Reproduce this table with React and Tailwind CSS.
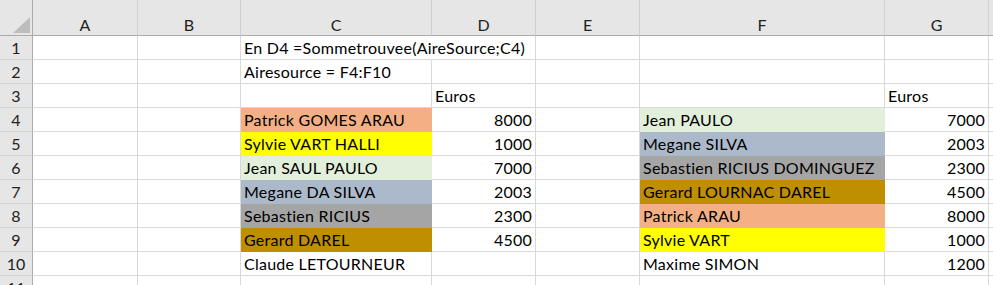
import React from "react";

const cols = ["A", "B", "C", "D", "E", "F", "G", ""];

const FILL = {
  salmon: "bg-[#F4B084] border-[#F4B084]",
  yellow: "bg-[#FFFF00] border-[#FFFF00]",
  green: "bg-[#E2EFDA] border-[#E2EFDA]",
  blue: "bg-[#ACB9CA] border-[#ACB9CA]",
  gray: "bg-[#A5A5A5] border-[#A5A5A5]",
  gold: "bg-[#BF8F00] border-[#BF8F00]",
};

const E = {};
const rows = [
  [E, E, { t: "En D4 =Sommetrouvee(AireSource;C4)", spill: true }, E, E, E, E, E],
  [E, E, { t: "Airesource = F4:F10" }, E, E, E, E, E],
  [E, E, E, { t: "Euros" }, E, E, { t: "Euros" }, E],
  [E, E, { t: "Patrick GOMES ARAU", fill: "salmon" }, { t: "8000", right: true }, E, { t: "Jean PAULO", fill: "green" }, { t: "7000", right: true }, E],
  [E, E, { t: "Sylvie VART HALLI", fill: "yellow" }, { t: "1000", right: true }, E, { t: "Megane SILVA", fill: "blue" }, { t: "2003", right: true }, E],
  [E, E, { t: "Jean SAUL PAULO", fill: "green" }, { t: "7000", right: true }, E, { t: "Sebastien RICIUS DOMINGUEZ", fill: "gray" }, { t: "2300", right: true }, E],
  [E, E, { t: "Megane DA SILVA", fill: "blue" }, { t: "2003", right: true }, E, { t: "Gerard LOURNAC DAREL", fill: "gold" }, { t: "4500", right: true }, E],
  [E, E, { t: "Sebastien RICIUS", fill: "gray" }, { t: "2300", right: true }, E, { t: "Patrick ARAU", fill: "salmon" }, { t: "8000", right: true }, E],
  [E, E, { t: "Gerard DAREL", fill: "gold" }, { t: "4500", right: true }, E, { t: "Sylvie VART", fill: "yellow" }, { t: "1000", right: true }, E],
  [E, E, { t: "Claude LETOURNEUR" }, E, E, { t: "Maxime SIMON" }, { t: "1200", right: true }, E],
  [E, E, E, E, E, E, E, E],
];

export default function App() {
  return (
    <div
      className="w-[993px] h-[285px] overflow-hidden bg-white text-black"
      style={{ fontFamily: "Lato, 'Open Sans', sans-serif" }}
    >
      <div className="grid grid-cols-[33px_105px_103px_191px_104px_104px_245px_104px_1fr] text-[16px]">
        <div className="relative h-[36px] bg-[#E6E6E6] border-r border-b border-r-[#ABABAB] border-b-[#ABABAB]">
          <svg className="absolute left-0 top-0" width="32" height="35" viewBox="0 0 32 35">
            <polygon points="13,33 30,33 30,17" fill="#BDBDBD" />
          </svg>
        </div>
        {cols.map((c, i) => (
          <div
            key={c + i}
            className="h-[36px] bg-[#E6E6E6] border-b border-b-[#ABABAB] border-r border-r-[#D0D0D0] flex items-center justify-center pt-[15px] text-[#222]"
          >
            {c}
          </div>
        ))}
        {rows.map((row, r) => (
          <React.Fragment key={r}>
            <div className="h-[24px] bg-[#E6E6E6] border-r border-r-[#ABABAB] border-b border-b-[#D0D0D0] flex items-center justify-center pt-[1px] text-[#222]">
              {r + 1}
            </div>
            {row.map((cell, ci) => {
              const fill = cell.fill ? FILL[cell.fill] : "border-[#D9D9D9]";
              return (
                <div
                  key={ci}
                  className={`relative h-[24px] border-r border-b ${fill} ${cell.spill ? "border-r-transparent z-10" : ""} flex items-center px-[3px] pt-[1px] whitespace-nowrap tracking-[0.25px] ${cell.right ? "justify-end" : "justify-start"}`}
                >
                  {cell.t ? <span>{cell.t}</span> : null}
                </div>
              );
            })}
          </React.Fragment>
        ))}
      </div>
    </div>
  );
}
